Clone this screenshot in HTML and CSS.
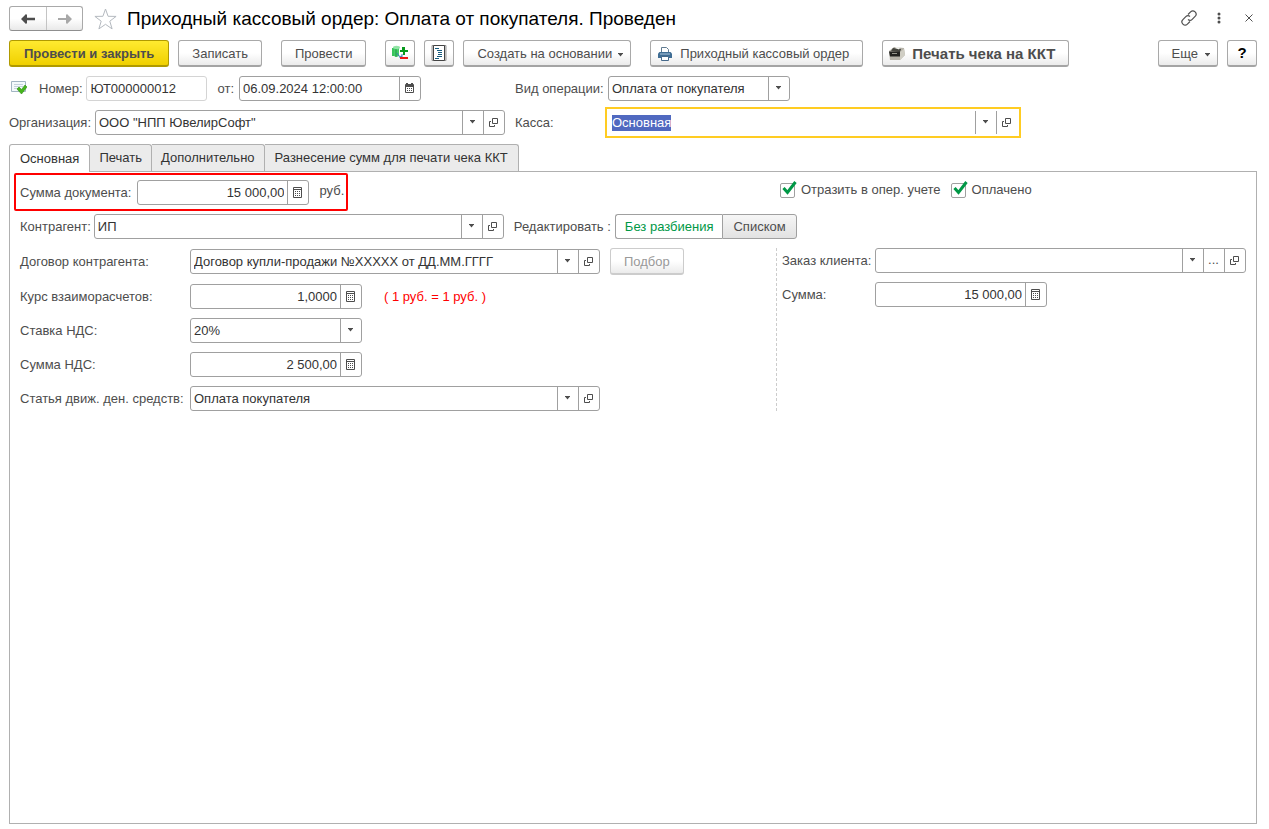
FILE: index.html
```html
<!DOCTYPE html>
<html lang="ru">
<head>
<meta charset="utf-8">
<meta name="viewport" content="width=device-width, initial-scale=1">
<title>Приходный кассовый ордер</title>
<link rel="stylesheet" href="styles.css">
</head>
<body>
<svg class="sprite" aria-hidden="true">
  <symbol id="i-down" viewBox="0 0 7 4"><path d="M1 0h5v1H1zM1.500 1h4L3.500 3.500z"/></symbol>
  <symbol id="i-open" viewBox="0 0 9 9"><path d="M3.500.5h5v5h-5zM2 3.500H.5v5h5V7" fill="none" stroke="currentColor"/></symbol>
  <symbol id="i-calc" viewBox="0 0 9 11"><path d="M.5.5h8v10h-8zM0 2.500h9" fill="none" stroke="currentColor"/><path d="M2 4h1v1H2zM4 4h1v1H4zM6 4h1v1H6zM2 6h1v1H2zM4 6h1v1H4zM6 6h1v1H6zM2 8h1v1H2zM4 8h1v1H4zM6 8h1v1H6z"/></symbol>
  <symbol id="i-cal" viewBox="0 0 9 10"><path d="M.5 1.500h8v8h-8z" fill="none" stroke="currentColor"/><path d="M1 0h2v2H1zM6 0h2v2H6zM0 2h9v2H0zM2 5h1v1H2zM4 5h1v1H4zM6 5h1v1H6zM2 7h1v1H2zM4 7h1v1H4zM6 7h1v1H6z"/></symbol>
</svg>
<main class="page">
  <header class="title-bar">
    <div class="nav">
      <button type="button" aria-label="Назад"><svg width="14" height="10" viewBox="0 0 14 10"><path d="M0 5 5 0l1 1v2.800h8v2.400H6V9l-1 1z"/></svg></button>
      <button type="button" class="nav-off" aria-label="Вперед"><svg width="14" height="10" viewBox="0 0 14 10"><path d="M14 5 9 0 8 1v3H0v2h8v3l1 1z"/></svg></button>
    </div>
    <button type="button" class="plain star" aria-label="В избранное"><svg width="23" height="22" viewBox="0 0 23 22"><path d="m11.500 1 2.600 7.300 8 .1-6.300 4.800 2.300 7.700-6.600-4.600-6.600 4.600 2.300-7.700L.9 8.400l8-.1z" fill="#fff" stroke="#b4b9bf"/></svg></button>
    <h1>Приходный кассовый ордер: Оплата от покупателя. Проведен</h1>
    <div class="window-tools">
      <button type="button" class="plain" aria-label="Ссылка"><svg width="16" height="16" viewBox="0 0 16 16"><path d="M7 4.500 9.600 1.900a3.100 3.100 0 0 1 4.500 4.500l-2.900 2.900a3.100 3.100 0 0 1-4.200.2M9 11.500l-2.600 2.600a3.100 3.100 0 0 1-4.500-4.500l2.900-2.900A3.100 3.100 0 0 1 9 6.500" fill="none" stroke="#505050" stroke-width="1.200"/></svg></button>
      <button type="button" class="plain" aria-label="Меню"><svg width="4" height="12" viewBox="0 0 4 12"><circle cx="2" cy="2" r="1.500"/><circle cx="2" cy="6" r="1.500"/><circle cx="2" cy="10" r="1.500"/></svg></button>
      <button type="button" class="plain" aria-label="Закрыть"><svg width="8" height="8" viewBox="0 0 8 8"><path d="m.5.5 7 7m0-7-7 7" stroke="#505050"/></svg></button>
    </div>
  </header>

  <div class="toolbar">
    <button type="button" class="btn primary">Провести и закрыть</button>
    <button type="button" class="btn">Записать</button>
    <button type="button" class="btn group-start">Провести</button>
    <button type="button" class="btn icon-btn group-start" aria-label="Движения документа"><svg width="17" height="16" viewBox="0 0 17 16"><path d="M0 3h2v8H0z" fill="#38c45c"/><ellipse cx="4.500" cy="2.500" rx="3.500" ry="1.800" fill="#92e4a6"/><path d="M2 3.500c1 1 4 1 5 0V11c-1 1-4 1-5 0z" fill="#45cd68"/><path d="M4 4v8" stroke="#1b9840"/><path d="M10 2h3v3h3v2h-3v3h-2V7H8V5h2z" fill="#08991d"/><path d="M5 8c1 3 3 4 5 3M10 9v3H7" stroke="#3b7cb8" fill="none"/><path d="M8 12h8v2H8z" fill="#f01515"/></svg></button>
    <button type="button" class="btn icon-btn" aria-label="Журнал"><svg width="16" height="16" viewBox="0 0 16 16"><path d="M1 .5h14v15H1z" fill="#ddd" stroke="#999"/><path d="M2.500.5h11v15h-11z" fill="#fff" stroke="#444"/><path d="M4 3.500h4M6 5.500h5M7 7.500h4M7 9.500h4M6 11.500h5M4 13.500h4" stroke="#155a7d"/></svg></button>
    <button type="button" class="btn">Создать на основании<svg class="arrow" width="7" height="4"><use href="#i-down"/></svg></button>
    <button type="button" class="btn with-icon group-start"><svg width="14" height="14" viewBox="0 0 14 14"><path d="M3.500 6V.5h5l2 2V6" fill="#fff" stroke="#607b91"/><path d="M1.500 5h11L14 6.500V11H0V6.500z" fill="#3f6d94"/><path d="M2 7h10" stroke="#adc6dc"/><path d="M3.500 9.500h7v4h-7z" fill="#fff" stroke="#46698b"/></svg>Приходный кассовый ордер</button>
    <button type="button" class="btn with-icon strong group-start"><svg width="16" height="13" viewBox="0 0 16 13"><path d="m0 4 5-4 10 1 1 7-5 5H1z" fill="#b5b2a8"/><path d="m4 1 8 1-1 3-9-1z" fill="#45453f"/><path d="m6 1 1-1 4 .5-1 2z" fill="#f4f4f0"/><path d="M0 4.500h11v5H1z" fill="#22221f"/><path d="m11 5 4-3 1 6-5 5z" fill="#d0cec4"/><path d="M3 6.500h5" stroke="#96968c"/></svg>Печать чека на ККТ</button>
    <button type="button" class="btn more">Еще<svg class="arrow" width="7" height="4"><use href="#i-down"/></svg></button>
    <button type="button" class="btn icon-btn help" aria-label="Справка">?</button>
  </div>

  <div class="head-fields">
    <div class="line">
      <svg class="status" width="16" height="15" viewBox="0 0 16 15"><path d="M.5 1.500h14v10H.5z" fill="#f4f9fc" stroke="#a2b5c3"/><path d="M3 4.500h9M3 6.500h9M3 8.500h5" stroke="#c5d3dc"/><path d="m6 9 2-2 2.500 2.500L14 5l2 2-5.500 7z" fill="#45b51b" stroke="#2f8d17" stroke-width=".6"/></svg>
      <label for="num">Номер:</label>
      <div class="field w-num readonly"><input id="num" value="ЮТ000000012" readonly></div>
      <label for="date" class="date-label">от:</label>
      <div class="field w-date"><input id="date" value="06.09.2024 12:00:00"><button type="button" aria-label="Календарь"><svg width="9" height="10"><use href="#i-cal"/></svg></button></div>
    </div>
    <label for="kind">Вид операции:</label>
    <div class="field w-kind"><select id="kind"><option>Оплата от покупателя</option></select><span class="cell"><svg width="7" height="4"><use href="#i-down"/></svg></span></div>

    <div class="line">
      <label for="org" class="org-label">Организация:</label>
      <div class="field grow"><input id="org" value="ООО &quot;НПП ЮвелирСофт&quot;"><button type="button" aria-label="Выбрать"><svg width="7" height="4"><use href="#i-down"/></svg></button><button type="button" aria-label="Открыть"><svg width="9" height="9"><use href="#i-open"/></svg></button></div>
    </div>
    <label for="cash">Касса:</label>
    <div class="field w-long active"><input id="cash" value="Основная"><button type="button" aria-label="Выбрать"><svg width="7" height="4"><use href="#i-down"/></svg></button><button type="button" aria-label="Открыть"><svg width="9" height="9"><use href="#i-open"/></svg></button></div>
  </div>

  <div class="tabs" role="tablist">
    <button type="button" role="tab" aria-selected="true">Основная</button>
    <button type="button" role="tab" aria-selected="false">Печать</button>
    <button type="button" role="tab" aria-selected="false">Дополнительно</button>
    <button type="button" role="tab" aria-selected="false">Разнесение сумм для печати чека ККТ</button>
  </div>

  <section class="panel" role="tabpanel">
    <div class="top-split">
      <div class="marked">
        <label for="total">Сумма документа:</label>
        <div class="field w-sum"><input id="total" class="num" value="15 000,00"><button type="button" aria-label="Калькулятор"><svg width="9" height="11"><use href="#i-calc"/></svg></button></div>
        <span class="currency">руб.</span>
      </div>
      <div class="checks">
        <label class="check"><input type="checkbox" checked><svg width="15" height="15" viewBox="0 0 15 15"><path d="m1.500 7 4 4.500L13.500 1" fill="none" stroke="#009846" stroke-width="3"/></svg>Отразить в опер. учете</label>
        <label class="check"><input type="checkbox" checked><svg width="15" height="15" viewBox="0 0 15 15"><path d="m1.500 7 4 4.500L13.500 1" fill="none" stroke="#009846" stroke-width="3"/></svg>Оплачено</label>
      </div>
    </div>

    <div class="partner">
      <label for="partner">Контрагент:</label>
      <div class="field w-long"><input id="partner" value="ИП"><button type="button" aria-label="Выбрать"><svg width="7" height="4"><use href="#i-down"/></svg></button><button type="button" aria-label="Открыть"><svg width="9" height="9"><use href="#i-open"/></svg></button></div>
      <span class="edit-label">Редактировать :</span>
      <div class="toggle"><button type="button" aria-pressed="true">Без разбиения</button><button type="button" aria-pressed="false">Списком</button></div>
    </div>

    <div class="details">
      <div class="form form-left">
        <label for="contract">Договор контрагента:</label>
        <div class="line"><div class="field w-long"><input id="contract" value="Договор купли-продажи №XXXXX от ДД.ММ.ГГГГ"><button type="button" aria-label="Выбрать"><svg width="7" height="4"><use href="#i-down"/></svg></button><button type="button" aria-label="Открыть"><svg width="9" height="9"><use href="#i-open"/></svg></button></div><button type="button" class="btn pick" disabled>Подбор</button></div>
        <label for="rate">Курс взаиморасчетов:</label>
        <div class="line"><div class="field w-sum"><input id="rate" class="num" value="1,0000"><button type="button" aria-label="Калькулятор"><svg width="9" height="11"><use href="#i-calc"/></svg></button></div><span class="rate-note">( 1 руб. = 1 руб. )</span></div>
        <label for="vat">Ставка НДС:</label>
        <div class="field w-sum"><select id="vat"><option>20%</option></select><span class="cell"><svg width="7" height="4"><use href="#i-down"/></svg></span></div>
        <label for="vatsum">Сумма НДС:</label>
        <div class="field w-sum"><input id="vatsum" class="num" value="2 500,00"><button type="button" aria-label="Калькулятор"><svg width="9" height="11"><use href="#i-calc"/></svg></button></div>
        <label for="article">Статья движ. ден. средств:</label>
        <div class="field w-long"><input id="article" value="Оплата покупателя"><button type="button" aria-label="Выбрать"><svg width="7" height="4"><use href="#i-down"/></svg></button><button type="button" aria-label="Открыть"><svg width="9" height="9"><use href="#i-open"/></svg></button></div>
      </div>
      <div class="form form-right">
        <label for="order">Заказ клиента:</label>
        <div class="field"><input id="order"><button type="button" aria-label="Выбрать"><svg width="7" height="4"><use href="#i-down"/></svg></button><button type="button">...</button><button type="button" aria-label="Открыть"><svg width="9" height="9"><use href="#i-open"/></svg></button></div>
        <label for="ordersum">Сумма:</label>
        <div class="field w-sum"><input id="ordersum" class="num" value="15 000,00"><button type="button" aria-label="Калькулятор"><svg width="9" height="11"><use href="#i-calc"/></svg></button></div>
      </div>
    </div>
  </section>
</main>
<script src="script.js"></script>
</body>
</html>
```
FILE: styles.css
```css
* { box-sizing: border-box; }

body {
  margin: 0;
  background: #fff;
  color: #4d4d4d;
  font: 13px/16px "Liberation Sans", Arial, sans-serif;
}

button, input, select { font: inherit; color: inherit; margin: 0; }
button { padding: 0; cursor: pointer; }
svg { display: block; fill: currentColor; flex: none; }
label, button, span { white-space: nowrap; }

.sprite { position: absolute; width: 0; height: 0; }

.page {
  display: flex;
  flex-direction: column;
  min-height: 100vh;
  padding: 6px 12px 5px 9px;
}

.plain {
  display: grid;
  place-items: center;
  border: 0;
  background: none;
}

/* Title */
.title-bar { display: flex; align-items: center; height: 25px; }

.nav {
  display: flex;
  height: 25px;
  border: 1px solid #a9a9a9;
  border-bottom-color: #8f8f8f;
  border-radius: 3px;
  background: linear-gradient(#fff 50%, #e9e9e9);
}
.nav button {
  display: grid;
  place-items: center;
  width: 36px;
  border: 0;
  background: none;
}
.nav button + button { border-left: 1px solid #c4c4c4; }
.nav .nav-off { color: #a8a8a8; }

.star { margin-left: 11px; }

h1 {
  margin: 0 0 0 10px;
  color: #000;
  font-size: 19px;
  font-weight: 400;
  line-height: 24px;
}

.window-tools { display: flex; margin: 0 -7px 2px auto; }
.window-tools .plain { width: 30px; height: 24px; }

/* Command bar */
.toolbar { display: flex; gap: 9px; margin-top: 9px; }

.btn {
  display: flex;
  align-items: center;
  justify-content: center;
  height: 27px;
  padding: 1px 13px 0;
  border: 1px solid #a9a9a9;
  border-bottom: 2px solid #a4a4a4;
  border-radius: 3px;
  background: linear-gradient(#fff 50%, #ebebeb);
}
.group-start { margin-left: 10px; }
.primary {
  padding: 1px 14px 0;
  border-color: #b09a00;
  background: linear-gradient(#ffea30, #f0d000);
  font-weight: 700;
}
.icon-btn { width: 30px; padding: 0; }
.arrow { margin: 2px 0 0 5px; }
.btn:has(.arrow) { padding-right: 6px; }
.with-icon { gap: 8px; padding-left: 7px; }
.strong { gap: 7px; padding-left: 6px; font-weight: 700; font-size: 15px; }
.more { margin-left: auto; }
.more .arrow { margin-left: 6px; }
.help { color: #000; font-size: 15px; font-weight: 700; }

/* Fields */
.field {
  display: flex;
  position: relative;
  height: 25px;
  min-width: 0;
  border: 1px solid #a0a0a0;
  border-radius: 3px;
  background: #fff;
  color: #333;
}
.field input, .field select {
  flex: 1;
  width: 100%;
  min-width: 0;
  padding: 0 3px;
  border: 0;
  outline: 0;
  background: none;
  appearance: none;
}
.field .num { text-align: right; }
.field button, .cell {
  display: grid;
  flex: none;
  place-items: center;
  width: 21px;
  padding: 0 1px 1px 0;
  border: 0;
  border-left: 1px solid #a0a0a0;
  background: none;
  color: #4d4d4d;
}
.cell { pointer-events: none; }
.readonly { border-color: #d4d4d4; }
.active {
  border-color: transparent;
  border-radius: 0;
  outline: 2px solid #fc2;
  outline-offset: 1px;
}
.active ::selection { background: #5069c0; color: #fff; }

.w-num { width: 121px; }
.w-date { width: 182px; }
.w-kind { width: 182px; }
.w-sum { width: 172px; }
.w-long { width: 410px; }
.grow { flex: 1; }

.line { display: flex; align-items: center; min-width: 0; }

.head-fields {
  display: grid;
  grid-template-columns: 496px 83px minmax(0, 1fr);
  align-items: center;
  gap: 9px 10px;
  margin-top: 9px;
}
.status { margin: 0 12px 2px 2px; }
.head-fields .w-num { margin-left: auto; }
.date-label { margin: 0 5px 0 10px; }
.head-fields .w-date { margin-right: 84px; }
.org-label { width: 86px; }

/* Tabs */
.tabs { display: flex; margin-top: 9px; }
.tabs button {
  height: 27px;
  padding: 0 9px;
  border: 1px solid #b0b0b0;
  border-width: 1px 1px 0 0;
  border-radius: 0 3px 0 0;
  background: #ebebeb;
  color: #333;
}
.tabs button:first-child {
  padding: 0 10px;
  border-left-width: 1px;
  border-radius: 3px 3px 0 0;
}
.tabs button:last-child { padding: 0 10px; }
.tabs [aria-selected="true"] {
  z-index: 1;
  height: 28px;
  margin-bottom: -1px;
  background: #fff;
}

.panel {
  flex: 1;
  padding: 1px 10px 10px 4px;
  border: 1px solid #b0b0b0;
}

.top-split, .details {
  display: grid;
  grid-template-columns: 762px minmax(0, 1fr);
}

.marked {
  display: flex;
  align-items: center;
  justify-self: start;
  height: 38px;
  padding: 1px 2px 0 4px;
  border: 2px solid #f00;
  border-radius: 2px;
}
.marked .w-sum { margin: 0 10px 0 6px; }
.currency { padding-bottom: 4px; }

.checks { display: flex; gap: 10px; padding: 9px 0 0 4px; align-items: start; }
.check { display: flex; position: relative; align-items: center; }
.check input {
  width: 15px;
  height: 15px;
  margin-right: 6px;
  border: 1px solid #a0a0a0;
  border-radius: 2px;
  background: #fff;
  appearance: none;
}
.check svg { position: absolute; top: -1px; left: 2px; }
.check input:not(:checked) + svg { display: none; }

.partner { display: flex; align-items: center; margin-top: 3px; padding-left: 6px; }
.partner .w-long { margin-left: 3px; }
.edit-label { margin: 0 4px 0 10px; }

.toggle { display: flex; height: 25px; }
.toggle button {
  padding: 0 10px;
  border: 1px solid #a0a0a0;
  border-radius: 0 3px 3px 0;
  background: linear-gradient(#f6f6f6, #e2e2e2);
}
.toggle [aria-pressed="true"] {
  padding: 0 9px;
  border-right: 0;
  border-radius: 3px 0 0 3px;
  background: #fff;
  color: #009846;
}

.details { margin-top: 9px; }
.form {
  display: grid;
  align-content: start;
  align-items: center;
  gap: 9px 0;
}
.form-left { grid-template-columns: 170px minmax(0, 1fr); padding-left: 6px; }
.form-right {
  grid-template-columns: 93px minmax(0, 1fr);
  padding-left: 5px;
  border-left: 1px dashed #ccc;
}
.pick { margin-left: 10px; border-color: #ccc; color: #999; cursor: default; }
.rate-note { margin-left: 22px; color: #f00; }
```
FILE: script.js
```js
const cash = document.getElementById("cash");
cash.focus();
cash.select();
```
